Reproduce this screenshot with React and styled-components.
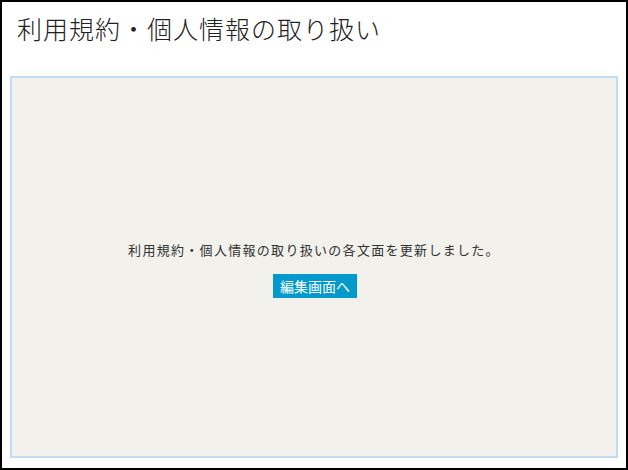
import React from "react";
import styled, { createGlobalStyle } from "styled-components";

const Global = createGlobalStyle`
  html, body { margin: 0; padding: 0; background: #fff; }
  body { font-family: "Noto Sans CJK JP", "Noto Sans", sans-serif; }
  * { box-sizing: border-box; }
`;

const Frame = styled.div`
  width: 628px;
  height: 470px;
  border: 2px solid #000;
  display: flex;
  flex-direction: column;
  background: #fff;
`;

const Title = styled.h1`
  margin: 0;
  padding: 6px 0 0 15px;
  height: 74px;
  font-size: 25px;
  font-weight: 300;
  line-height: 40px;
  color: #222;
  letter-spacing: 1px;
`;

const Panel = styled.section`
  flex: 1;
  margin: 0 8px 10px 8px;
  border: 2px solid #c2ddf3;
  background: #f2f1ec;
  display: flex;
  flex-direction: column;
  align-items: center;
  justify-content: center;
  gap: 15px;
  padding-top: 4px;
`;

const Message = styled.p`
  margin: 0;
  font-size: 13px;
  letter-spacing: 1.3px;
  color: #333;
  line-height: 18px;
`;

const Button = styled.button`
  border: none;
  background: #0299cc;
  color: #fff;
  font-family: inherit;
  font-size: 14px;
  line-height: 24px;
  height: 24px;
  padding: 0 7px;
  margin-left: 2px;
  cursor: pointer;
`;

export default function App() {
  return (
    <>
      <Global />
      <Frame>
        <Title>利用規約・個人情報の取り扱い</Title>
        <Panel>
          <Message>利用規約・個人情報の取り扱いの各文面を更新しました。</Message>
          <Button>編集画面へ</Button>
        </Panel>
      </Frame>
    </>
  );
}
